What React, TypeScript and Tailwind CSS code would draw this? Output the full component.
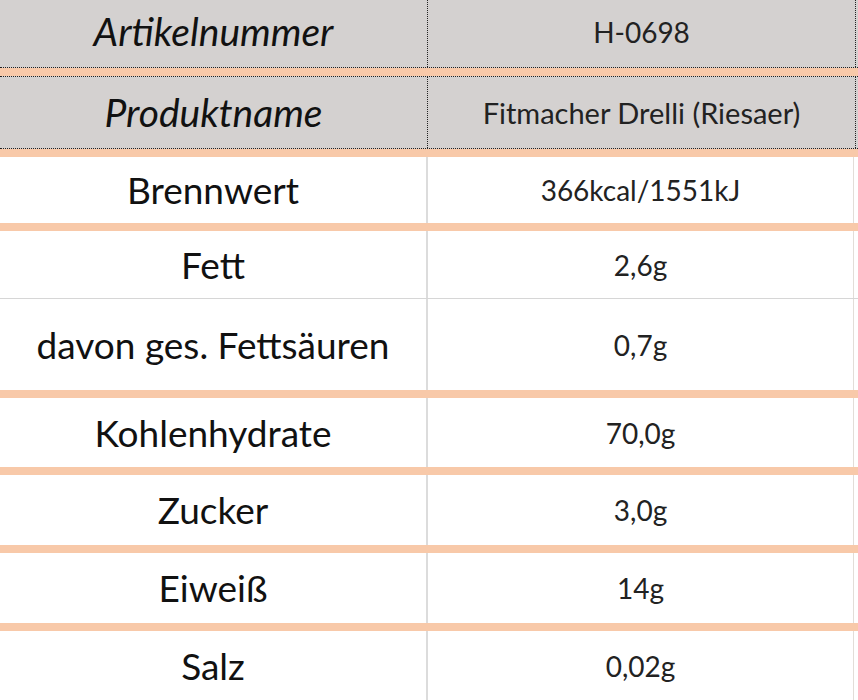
import React from "react";

const rows = [
  { label: "Brennwert", value: "366kcal/1551kJ", h: "h-[66px]", sep: true },
  { label: "Fett", value: "2,6g", h: "h-[68px]", sep: false, line: true },
  { label: "davon ges. Fettsäuren", value: "0,7g", h: "h-[91px]", sep: true },
  { label: "Kohlenhydrate", value: "70,0g", h: "h-[69px]", sep: true },
  { label: "Zucker", value: "3,0g", h: "h-[70px]", sep: true },
  { label: "Eiweiß", value: "14g", h: "h-[70px]", sep: true },
  { label: "Salz", value: "0,02g", h: "h-[70px]", sep: false },
];

function Peach() {
  return <div className="h-[8px] bg-[#f8c9a9]" />;
}

export default function App() {
  return (
    <div className="w-[858px] h-[700px] overflow-hidden bg-white font-['Lato','Liberation_Sans',sans-serif] text-[#111]">
      {/* Header rows */}
      <div className="grid grid-cols-[428px_428px] h-[68px] bg-[#d4d1d0] border-b border-dotted border-[#222]">
        <div className="flex items-center justify-center border-r border-dotted border-[#222] italic text-[39px] pb-1">
          Artikelnummer
        </div>
        <div className="flex items-center justify-center border-r border-dotted border-[#222] text-[28px] text-[#222] pb-1">
          H-0698
        </div>
      </div>
      <Peach />
      <div className="grid grid-cols-[428px_428px] h-[73px] bg-[#d4d1d0] border-y border-dotted border-[#222]">
        <div className="flex items-center justify-center border-r border-dotted border-[#222] italic text-[39px]">
          Produktname
        </div>
        <div className="flex items-center justify-center border-r border-dotted border-[#222] text-[29px] text-[#222]">
          Fitmacher Drelli (Riesaer)
        </div>
      </div>
      <Peach />

      {/* Nutrition rows */}
      {rows.map((r) => (
        <React.Fragment key={r.label}>
          <div
            className={`grid grid-cols-[428px_426px] ${r.h} ${r.line ? "border-b border-[#d6d6d6]" : ""}`}
          >
            <div className="flex items-center justify-center border-r-2 border-[#dcdcdc] text-[37px]">
              {r.label}
            </div>
            <div className="flex items-center justify-center border-r border-[#e2ddd8] text-[28px] text-[#222]">
              {r.value}
            </div>
          </div>
          {r.sep && <Peach />}
        </React.Fragment>
      ))}
    </div>
  );
}
